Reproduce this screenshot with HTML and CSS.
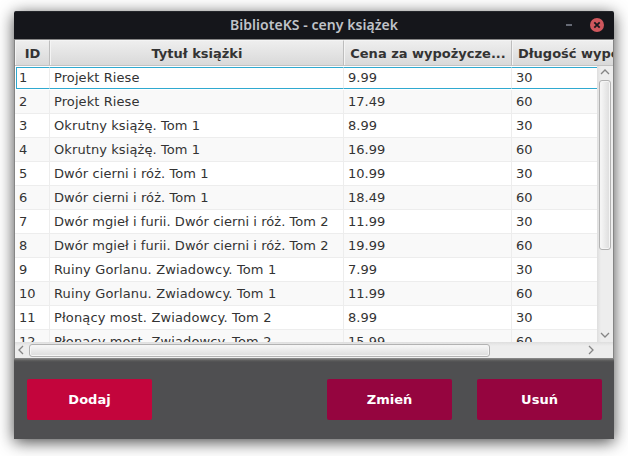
FILE: index.html
```html
<!DOCTYPE html>
<html lang="pl">
<head>
<meta charset="utf-8">
<title>BiblioteKS - ceny książek</title>
<link rel="stylesheet" href="styles.css">
</head>
<body>
<main class="window">
  <header class="titlebar">
    <h1 class="title">BiblioteKS - ceny książek</h1>
    <div class="controls">
      <span class="minimize"></span>
      <svg class="close" width="14" height="14" viewBox="0 0 14 14"><circle cx="7" cy="7" r="7"/><path d="M4.300 4.300l5.400 5.400M9.700 4.300l-5.400 5.400"/></svg>
    </div>
  </header>
  <section class="table">
    <div class="cols head">
      <span class="th">ID</span><span class="th">Tytuł książki</span><span class="th">Cena za wypożycze...</span><span class="th last">Długość wypożyczenia</span>
    </div>
    <div class="body">
      <div class="rows">
        <div class="cols row selected"><span>1</span><span>Projekt Riese</span><span>9.99</span><span>30</span></div>
        <div class="cols row"><span>2</span><span>Projekt Riese</span><span>17.49</span><span>60</span></div>
        <div class="cols row"><span>3</span><span>Okrutny książę. Tom 1</span><span>8.99</span><span>30</span></div>
        <div class="cols row"><span>4</span><span>Okrutny książę. Tom 1</span><span>16.99</span><span>60</span></div>
        <div class="cols row"><span>5</span><span>Dwór cierni i róż. Tom 1</span><span>10.99</span><span>30</span></div>
        <div class="cols row"><span>6</span><span>Dwór cierni i róż. Tom 1</span><span>18.49</span><span>60</span></div>
        <div class="cols row long"><span>7</span><span>Dwór mgieł i furii. Dwór cierni i róż. Tom 2</span><span>11.99</span><span>30</span></div>
        <div class="cols row long"><span>8</span><span>Dwór mgieł i furii. Dwór cierni i róż. Tom 2</span><span>19.99</span><span>60</span></div>
        <div class="cols row wide"><span>9</span><span>Ruiny Gorlanu. Zwiadowcy. Tom 1</span><span>7.99</span><span>30</span></div>
        <div class="cols row wide"><span>10</span><span>Ruiny Gorlanu. Zwiadowcy. Tom 1</span><span>11.99</span><span>60</span></div>
        <div class="cols row wide"><span>11</span><span>Płonący most. Zwiadowcy. Tom 2</span><span>8.99</span><span>30</span></div>
        <div class="cols row wide"><span>12</span><span>Płonący most. Zwiadowcy. Tom 2</span><span>15.99</span><span>60</span></div>
      </div>
      <div class="vscroll">
        <svg class="arrow" width="10" height="6" viewBox="0 0 10 6"><path d="M1 5L5 1l4 4"/></svg>
        <div class="vtrack"><div class="vthumb"></div></div>
        <svg class="arrow" width="10" height="6" viewBox="0 0 10 6"><path d="M1 1l4 4 4-4"/></svg>
      </div>
    </div>
    <div class="hscroll">
      <svg class="arrow" width="6" height="10" viewBox="0 0 6 10"><path d="M5 1L1 5l4 4"/></svg>
      <div class="htrack"><div class="hthumb"></div></div>
      <svg class="arrow" width="6" height="10" viewBox="0 0 6 10"><path d="M1 1l4 4-4 4"/></svg>
    </div>
  </section>
  <footer class="actions">
    <button class="btn add">Dodaj</button>
    <button class="btn edit">Zmień</button>
    <button class="btn">Usuń</button>
  </footer>
</main>
</body>
</html>
```
FILE: styles.css
```css
* { box-sizing: border-box; }
body {
  margin: 0;
  height: 456px;
  padding: 11px 14px 0;
  overflow: hidden;
  background: #fff;
  font: 13px "DejaVu Sans", sans-serif;
  color: #333;
}
.window {
  width: 600px;
  height: 428px;
  border-radius: 2px 2px 0 0;
  box-shadow: 0 3px 16px rgba(0, 0, 0, .72);
}
.titlebar {
  display: grid;
  grid-template-columns: 48px 1fr 48px;
  align-items: center;
  height: 28px;
  background: #15161b;
  border-top: 1px solid #24262b;
  border-radius: 2px 2px 0 0;
}
.title {
  grid-column: 2;
  margin: 0;
  padding-bottom: 2px;
  text-align: center;
  font: 600 14px/24px "Noto Sans", sans-serif;
  letter-spacing: .05px;
  color: #c0c3c9;
  white-space: nowrap;
}
.controls { display: flex; align-items: center; justify-content: flex-end; gap: 18px; padding-right: 10px; }
.minimize { width: 6px; height: 2px; flex: none; margin-top: -2px; background: #666a75; }
.close { flex: none; margin-top: -1px; }
.close circle { fill: #cf575d; }
.close path { fill: none; stroke: #16171c; stroke-width: 1.8; }
.table {
  height: 320px;
  padding: 1px;
  background: #858585;
  display: flex;
  flex-direction: column;
}
.cols { display: grid; grid-template-columns: 35px 294px 168px 1fr; white-space: nowrap; }
.head {
  height: 26px;
  flex: none;
  background: linear-gradient(#efefef, #d9d9d9);
  border-bottom: 1px solid #c3c3c3;
  font-weight: bold;
  text-align: center;
}
.th {
  height: 25px;
  overflow: hidden;
  border: 1px solid #f4f4f4;
  border-bottom: 0;
  border-right-color: #bdbdbd;
  line-height: 25px;
}
.th.last { text-align: left; padding-left: 5px; border-right: 0; }
.body { display: flex; height: 276px; flex: none; background: #fff; }
.rows { flex: 1; min-width: 0; height: 276px; overflow: hidden; }
.row { height: 24px; line-height: 23px; background: #fff; }
.row:nth-child(even) { background: #f9f9f9; }
.row span { padding-left: 4px; border-right: 1px solid #ededed; border-bottom: 1px solid #ededed; }
.row span:nth-child(2) { letter-spacing: .09px; }
.row.long span:nth-child(2) { letter-spacing: .05px; }
.row.wide span:nth-child(2) { letter-spacing: .14px; }
.row span:last-child { border-right: 0; }
.row.selected { padding: 1px 0; }
.selected span {
  height: 22px;
  line-height: 20px;
  border-top: 1px solid #2fa9d0;
  border-bottom: 1px solid #2fa9d0;
}
.selected span:first-child { margin-left: 1px; padding-left: 2px; border-left: 1px solid #2fa9d0; }
.arrow { flex: none; }
.arrow path { fill: none; stroke: #858585; stroke-width: 1.3; }
.vscroll {
  width: 16px;
  display: flex;
  flex-direction: column;
  align-items: center;
  padding: 3px 0 4px;
  background: linear-gradient(90deg, #dedede, #ededed 4px);
}
.vtrack { flex: 1; width: 12px; padding-top: 5px; }
.vthumb {
  height: 170px;
  border: 1px solid #b2b2b2;
  border-radius: 3px;
  background: linear-gradient(90deg, #f8f8f8, #dcdcdc);
  box-shadow: inset 0 0 0 1px #f5f5f5;
}
.hscroll {
  height: 16px;
  flex: none;
  display: flex;
  align-items: center;
  padding: 0 19px 0 3px;
  background: linear-gradient(#dedede, #ededed 4px);
}
.htrack { flex: 1; padding-left: 5px; }
.hthumb {
  width: 461px;
  height: 13px;
  margin-top: 1px;
  border: 1px solid #b2b2b2;
  border-radius: 3px;
  background: linear-gradient(#f8f8f8, #dcdcdc);
  box-shadow: inset 0 0 0 1px #f5f5f5;
}
.actions {
  height: 80px;
  display: flex;
  align-items: flex-start;
  gap: 25px;
  padding: 19px 12px 0 13px;
  border-top: 1px solid #707070;
  background: linear-gradient(#626262, #4f4f51 2px);
}
.btn {
  width: 125px;
  height: 41px;
  padding: 0;
  border: 0;
  border-radius: 2px;
  background: #95053f;
  color: #fff;
  font: bold 13px "DejaVu Sans", sans-serif;
}
.add { background: #c3053c; }
.edit { margin-left: auto; }
```
